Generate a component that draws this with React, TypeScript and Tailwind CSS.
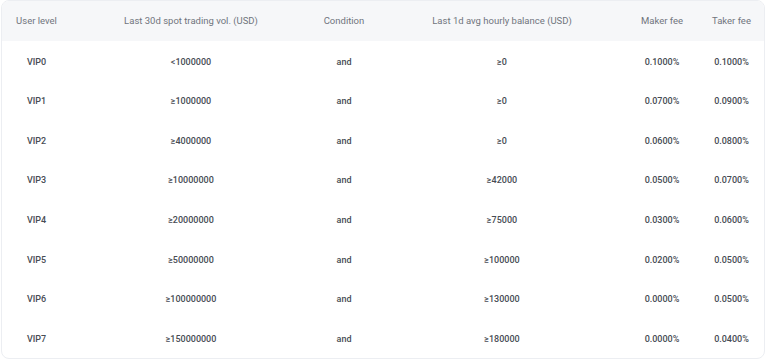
import React from 'react';

interface FeeRow {
  level: string;
  volume: string;
  balance: string;
  maker: string;
  taker: string;
}

const ROWS: FeeRow[] = [
  { level: 'VIP0', volume: '<1000000', balance: '≥0', maker: '0.1000%', taker: '0.1000%' },
  { level: 'VIP1', volume: '≥1000000', balance: '≥0', maker: '0.0700%', taker: '0.0900%' },
  { level: 'VIP2', volume: '≥4000000', balance: '≥0', maker: '0.0600%', taker: '0.0800%' },
  { level: 'VIP3', volume: '≥10000000', balance: '≥42000', maker: '0.0500%', taker: '0.0700%' },
  { level: 'VIP4', volume: '≥20000000', balance: '≥75000', maker: '0.0300%', taker: '0.0600%' },
  { level: 'VIP5', volume: '≥50000000', balance: '≥100000', maker: '0.0200%', taker: '0.0500%' },
  { level: 'VIP6', volume: '≥100000000', balance: '≥130000', maker: '0.0000%', taker: '0.0500%' },
  { level: 'VIP7', volume: '≥150000000', balance: '≥180000', maker: '0.0000%', taker: '0.0400%' },
];

const HEADERS = [
  { label: 'User level', width: 'w-[69px]' },
  { label: 'Last 30d spot trading vol. (USD)', width: 'w-[240px]' },
  { label: 'Condition', width: 'w-[66px]' },
  { label: 'Last 1d avg hourly balance (USD)', width: 'w-[250px]' },
  { label: 'Maker fee', width: 'w-[70px]' },
  { label: 'Taker fee', width: 'w-[69px]' },
];

export default function App() {
  return (
    <div className="h-[362px] w-[768px] bg-white font-['Roboto',sans-serif]">
      <div className="ml-px w-[764px] overflow-hidden rounded-lg border border-[#eceef2]">
        <table className="w-full table-fixed border-collapse text-center">
          <thead>
            <tr className="h-[40px] bg-[#f6f7f9]">
              {HEADERS.map((h) => (
                <th key={h.label} className={`${h.width} p-0 pt-px text-[9.5px] font-normal text-[#70757d]`}>
                  {h.label}
                </th>
              ))}
            </tr>
          </thead>
          <tbody>
            {ROWS.map((r) => (
              <tr key={r.level} className="h-[39.6px] text-[9px] font-medium text-[#474c54]">
                <td className="p-0 pt-[3px]">{r.level}</td>
                <td className="p-0 pt-[3px]">{r.volume}</td>
                <td className="p-0 pt-[3px]">and</td>
                <td className="p-0 pt-[3px]">{r.balance}</td>
                <td className="p-0 pt-[3px]">{r.maker}</td>
                <td className="p-0 pt-[3px]">{r.taker}</td>
              </tr>
            ))}
          </tbody>
        </table>
      </div>
    </div>
  );
}
